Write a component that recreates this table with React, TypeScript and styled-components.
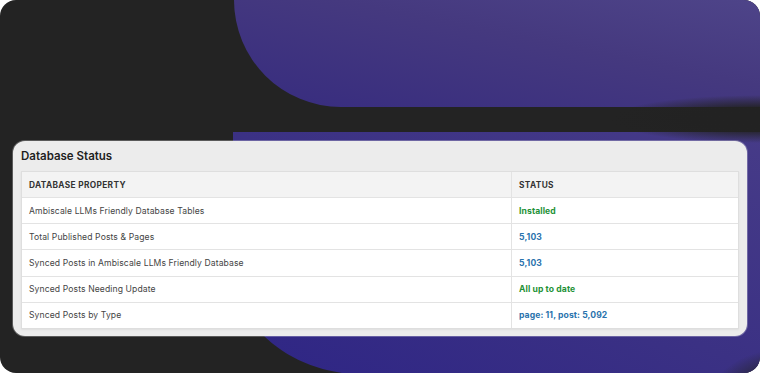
import styled, { createGlobalStyle } from 'styled-components';

const GlobalStyle = createGlobalStyle`
  html, body {
    margin: 0;
    background: #ffffff;
  }
  body {
    font-family: Inter, 'Noto Sans', 'Liberation Sans', sans-serif;
  }
`;

type Tone = 'plain' | 'ok' | 'info';

type Row = {
  label: string;
  value: string;
  tone: Tone;
};

const rows: Row[] = [
  { label: 'Ambiscale LLMs Friendly Database Tables', value: 'Installed', tone: 'ok' },
  { label: 'Total Published Posts & Pages', value: '5,103', tone: 'info' },
  { label: 'Synced Posts in Ambiscale LLMs Friendly Database', value: '5,103', tone: 'info' },
  { label: 'Synced Posts Needing Update', value: 'All up to date', tone: 'ok' },
  { label: 'Synced Posts by Type', value: 'page: 11, post: 5,092', tone: 'info' },
];

const toneColor: Record<Tone, string> = {
  plain: '#444444',
  ok: '#1f9237',
  info: '#2a73ad',
};

const Frame = styled.div`
  position: relative;
  width: 760px;
  height: 373px;
  box-sizing: border-box;
  padding: 141px 13px 0 13px;
  border-radius: 16px;
  overflow: hidden;
  background: #232323;
`;

const Backdrop = styled.svg`
  position: absolute;
  inset: 0;
  width: 100%;
  height: 100%;
`;

const Card = styled.section`
  position: relative;
  background: #ececec;
  border-radius: 12px;
  padding: 7px 8px 7px 8px;
  box-shadow: 0 0 0 1px rgba(255, 255, 255, 0.25);
`;

const Title = styled.h2`
  margin: 0 0 7px 0;
  font-size: 11.5px;
  line-height: 16px;
  font-weight: 600;
  color: #1f1f1f;
`;

const Table = styled.div`
  background: #ffffff;
  border: 1px solid #dedede;
  box-shadow: 0 1px 2px rgba(0, 0, 0, 0.06);
`;

const TableRow = styled.div<{ $head?: boolean }>`
  display: grid;
  grid-template-columns: 489px 1fr;
  height: ${({ $head }) => ($head ? '25px' : '25.2px')};
  background: ${({ $head }) => ($head ? '#f3f3f3' : '#ffffff')};
  & + & {
    border-top: 1px solid #e3e3e3;
  }
`;

const Cell = styled.div<{ $tone?: Tone; $head?: boolean }>`
  display: flex;
  align-items: center;
  padding-left: 7px;
  font-size: ${({ $head }) => ($head ? '8.3px' : '8.6px')};
  font-weight: ${({ $head, $tone }) => ($head || ($tone && $tone !== 'plain') ? 700 : 400)};
  letter-spacing: ${({ $head }) => ($head ? '0.35px' : '0.1px')};
  text-transform: ${({ $head }) => ($head ? 'uppercase' : 'none')};
  color: ${({ $tone, $head }) => ($head ? '#333333' : toneColor[$tone ?? 'plain'])};
  & + & {
    border-left: 1px solid #e3e3e3;
  }
`;

function Art() {
  return (
    <Backdrop viewBox="0 0 760 373" preserveAspectRatio="none" aria-hidden>
      <defs>
        <linearGradient id="topFill" x1="0" y1="1" x2="1" y2="0">
          <stop offset="0" stopColor="#372c7f" />
          <stop offset="0.6" stopColor="#45397f" />
          <stop offset="1" stopColor="#4e4489" />
        </linearGradient>
        <linearGradient id="lowFill" x1="0" y1="1" x2="1" y2="0">
          <stop offset="0" stopColor="#2e2585" />
          <stop offset="0.5" stopColor="#3b3184" />
          <stop offset="1" stopColor="#463b88" />
        </linearGradient>
        <radialGradient id="shade">
          <stop offset="0" stopColor="#222222" stopOpacity="1" />
          <stop offset="0.45" stopColor="#222222" stopOpacity="0.95" />
          <stop offset="1" stopColor="#222222" stopOpacity="0" />
        </radialGradient>
      </defs>
      <path d="M234 0 A107 107 0 0 0 341 107 L760 107 L760 0 Z" fill="url(#topFill)" />
      <path d="M233 132 H760 V373 H342 C292 366 248 335 233 285 Z" fill="url(#lowFill)" />
      <ellipse cx="760" cy="119" rx="150" ry="24" fill="url(#shade)" />
      <ellipse cx="790" cy="398" rx="80" ry="50" fill="url(#shade)" />
    </Backdrop>
  );
}

export default function App() {
  return (
    <>
      <GlobalStyle />
      <Frame>
        <Art />
        <Card>
          <Title>Database Status</Title>
          <Table>
            <TableRow $head>
              <Cell $head>Database Property</Cell>
              <Cell $head>Status</Cell>
            </TableRow>
            {rows.map((row) => (
              <TableRow key={row.label}>
                <Cell>{row.label}</Cell>
                <Cell $tone={row.tone}>{row.value}</Cell>
              </TableRow>
            ))}
          </Table>
        </Card>
      </Frame>
    </>
  );
}
